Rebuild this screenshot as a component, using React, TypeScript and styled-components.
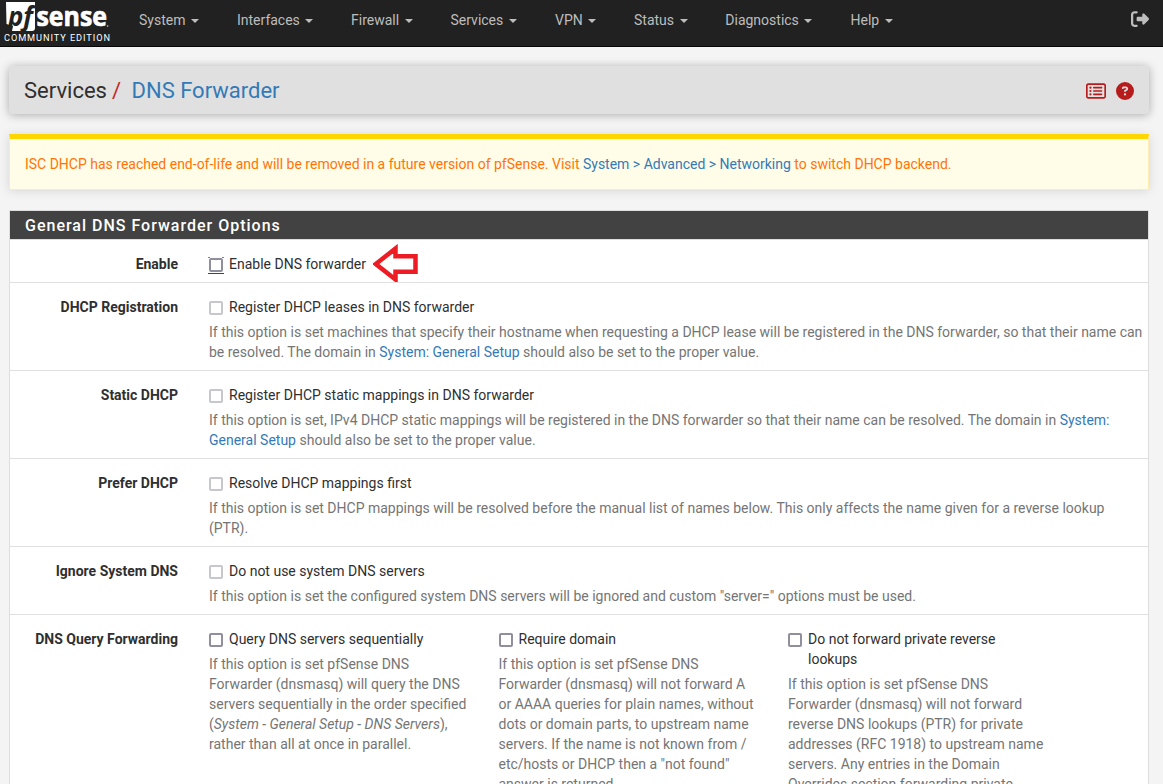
import React from "react";
import styled, { createGlobalStyle } from "styled-components";
import { FaRightFromBracket, FaRegRectangleList, FaCircleQuestion } from "react-icons/fa6";

const GlobalStyle = createGlobalStyle`
  * { box-sizing: border-box; }
  body {
    margin: 0;
    background: #f4f4f4;
    color: #2f2f2f;
    font: 14px/20px Roboto, "Liberation Sans", sans-serif;
  }
  a { color: #337ab7; text-decoration: none; }
`;

const Page = styled.div`
  width: 100%;
  height: 784px;
  overflow: hidden;
`;

const Navbar = styled.header`
  display: flex;
  height: 47px;
  background: #212121;
  border-bottom: 1px solid #080808;
`;

const Brand = styled.a`
  display: block;
  width: 124px;
  height: 46px;
`;

const Menu = styled.nav`
  display: flex;
  flex: 1;
`;

const MenuLink = styled.a<{ $width: number }>`
  display: flex;
  align-items: center;
  height: 40px;
  width: ${(p) => p.$width}px;
  padding-left: 15px;
  color: #bdbdbd;
`;

const Caret = styled.span`
  margin: 2px 0 0 5.5px;
  border-top: 4px solid currentColor;
  border-left: 4px solid transparent;
  border-right: 4px solid transparent;
`;

const Logout = styled.a`
  margin: 10px 14px 0 0;
  height: 18px;
  color: #bdbdbd;
  font-size: 18px;
  line-height: 0;
`;

const Main = styled.main`
  padding: 19px 14px 0 9px;
`;

const TitleBar = styled.header`
  display: flex;
  align-items: center;
  justify-content: space-between;
  height: 48px;
  padding: 2px 15px 0;
  background: #e0e0e0;
  border-radius: 4px;
  box-shadow: 0 1px 10px rgba(0, 0, 0, 0.3);
`;

const Crumbs = styled.h1`
  margin: 0;
  font-size: 22px;
  font-weight: 400;
  line-height: 26px;
`;

const Slash = styled.span`
  margin: 0 10.5px 0 5px;
  color: #c62828;
`;

const TitleIcons = styled.div`
  display: flex;
  align-items: center;
  gap: 10px;
  color: #b71c1c;
`;

const Alert = styled.div`
  height: 56px;
  margin: 20px 0 20px;
  padding: 15px;
  background: #fffde7;
  border: 1px solid #ffecb3;
  border-top: 5px solid #ffd600;
  box-shadow: 0 1px 10px rgba(0, 0, 0, 0.12);
  color: #ff7408;
  letter-spacing: -0.004px;
`;

const Panel = styled.section`
  background: #fff;
  border: 1px solid #ddd;
`;

const PanelTitle = styled.h2`
  margin: 0;
  height: 29px;
  padding: 1px 15px 0;
  border-bottom: 1px solid #ddd;
  background: #424242;
  color: #fff;
  font-size: 16px;
  font-weight: 500;
  line-height: 28px;
  letter-spacing: 1px;
`;

const Row = styled.div`
  display: flex;
  padding: 14px 0 8px;
  border-bottom: 1px solid #e0e0e0;
`;

const RowLabel = styled.div`
  flex: none;
  width: 168px;
  margin-right: 31px;
  font-weight: 700;
  text-align: right;
`;

const Option = styled.div<{ $column?: boolean }>`
  flex: ${(p) => (p.$column ? "none" : "1")};
  width: ${(p) => (p.$column ? "289.5px" : "auto")};
  padding-right: ${(p) => (p.$column ? "30px" : "5px")};
`;

const CheckLabel = styled.label`
  display: flex;
  gap: 6px;
`;

const Box = styled.span<{ $disabled?: boolean; $focused?: boolean }>`
  position: relative;
  flex: none;
  width: 14px;
  height: 14px;
  margin-top: 4px;
  border: 2px solid ${(p) => (p.$disabled ? "#c7c7ce" : "#8f8f9d")};
  border-radius: 2px;
  ${(p) =>
    p.$focused &&
    `&::before, &::after {
      content: "";
      position: absolute;
      left: -3px;
      right: -3px;
    }
    &::before {
      top: -3px;
      height: 1px;
      border: 0 solid #c45abb;
      border-width: 0 2px;
    }
    &::after {
      bottom: -4px;
      height: 1px;
      background: #a8009a;
    }`}
`;

const Help = styled.p`
  margin: 5px 0 0;
  color: #757575;
`;

const Pointer = styled.svg`
  flex: none;
  width: 47px;
  height: 38px;
  margin: -10px 0 -8px 1px;
`;

function Logo() {
  return (
    <svg width="124" height="46" viewBox="0 0 124 46">
      <path d="M6 2H35V28Q35 31 32 31H12L13 26L6.5 24Z" fill="#fff" />
      <text x="8" y="26" fontFamily="Open Sans, sans-serif" fontSize="26" fontWeight="700" fontStyle="italic" fill="#212121" textLength="25" lengthAdjust="spacingAndGlyphs">pf</text>
      <text x="36.5" y="25.7" fontFamily="Open Sans, sans-serif" fontSize="27" fontWeight="700" fill="#fff" stroke="#fff" strokeWidth=".7" textLength="70.5" lengthAdjust="spacingAndGlyphs">sense</text>
      <circle cx="107.6" cy="26" r=".9" fill="#999" />
      <text x="4" y="41" fontFamily="Roboto, sans-serif" fontSize="9.2" fill="#fff" textLength="106">COMMUNITY EDITION</text>
    </svg>
  );
}

const menu: [string, number][] = [
  ["System", 98],
  ["Interfaces", 114],
  ["Firewall", 99.5],
  ["Services", 104.5],
  ["VPN", 79],
  ["Status", 91.3],
  ["Diagnostics", 125.2],
  ["Help", 80],
];

interface CheckProps {
  label: string;
  children?: React.ReactNode;
  column?: boolean;
  disabled?: boolean;
  focused?: boolean;
  after?: React.ReactNode;
}

function Check({ label, children, column, disabled, focused, after }: CheckProps) {
  return (
    <Option $column={column}>
      <CheckLabel>
        <Box $disabled={disabled} $focused={focused} />
        <span>{label}</span>
        {after}
      </CheckLabel>
      {children && <Help>{children}</Help>}
    </Option>
  );
}

export default function App() {
  return (
    <Page>
      <GlobalStyle />
      <Navbar>
        <Brand><Logo /></Brand>
        <Menu>
          {menu.map(([name, width]) => (
            <MenuLink key={name} $width={width}>{name}<Caret /></MenuLink>
          ))}
        </Menu>
        <Logout><FaRightFromBracket /></Logout>
      </Navbar>
      <Main>
        <TitleBar>
          <Crumbs>Services<Slash>/</Slash><a>DNS Forwarder</a></Crumbs>
          <TitleIcons>
            <FaRegRectangleList size={20} />
            <FaCircleQuestion size={18} />
          </TitleIcons>
        </TitleBar>
        <Alert>
          ISC DHCP has reached end-of-life and will be removed in a future version of pfSense. Visit{" "}
          <a>System &gt; Advanced &gt; Networking</a> to switch DHCP backend.
        </Alert>
        <Panel>
          <PanelTitle>General DNS Forwarder Options</PanelTitle>
          <Row>
            <RowLabel>Enable</RowLabel>
            <Check
              label="Enable DNS forwarder"
              focused
              after={
                <Pointer viewBox="0 0 47 38">
                  <path d="M2.8 20 22.5 4.5V12.3H42.5V27.7H22.5V35.5Z" fill="#fff" stroke="#ed1c24" strokeWidth="4.5" />
                </Pointer>
              }
            />
          </Row>
          <Row>
            <RowLabel>DHCP Registration</RowLabel>
            <Check label="Register DHCP leases in DNS forwarder" disabled>
              If this option is set machines that specify their hostname when requesting a DHCP lease will be registered in the DNS forwarder, so that their name can be resolved. The domain in <a>System: General Setup</a> should also be set to the proper value.
            </Check>
          </Row>
          <Row>
            <RowLabel>Static DHCP</RowLabel>
            <Check label="Register DHCP static mappings in DNS forwarder" disabled>
              If this option is set, IPv4 DHCP static mappings will be registered in the DNS forwarder so that their name can be resolved. The domain in <a>System: General Setup</a> should also be set to the proper value.
            </Check>
          </Row>
          <Row>
            <RowLabel>Prefer DHCP</RowLabel>
            <Check label="Resolve DHCP mappings first" disabled>
              If this option is set DHCP mappings will be resolved before the manual list of names below. This only affects the name given for a reverse lookup (PTR).
            </Check>
          </Row>
          <Row>
            <RowLabel>Ignore System DNS</RowLabel>
            <Check label="Do not use system DNS servers" disabled>
              If this option is set the configured system DNS servers will be ignored and custom "server=" options must be used.
            </Check>
          </Row>
          <Row>
            <RowLabel>DNS Query Forwarding</RowLabel>
            <Check column label="Query DNS servers sequentially">
              If this option is set pfSense DNS Forwarder (dnsmasq) will query the DNS servers sequentially in the order specified (<em>System - General Setup - DNS Servers</em>), rather than all at once in parallel.
            </Check>
            <Check column label="Require domain">
              If this option is set pfSense DNS Forwarder (dnsmasq) will not forward A or AAAA queries for plain names, without dots or domain parts, to upstream name servers. If the name is not known from / etc/hosts or DHCP then a "not found" answer is returned.
            </Check>
            <Check column label="Do not forward private reverse lookups">
              If this option is set pfSense DNS Forwarder (dnsmasq) will not forward reverse DNS lookups (PTR) for private addresses (RFC 1918) to upstream name servers. Any entries in the Domain Overrides section forwarding private
            </Check>
          </Row>
        </Panel>
      </Main>
    </Page>
  );
}
